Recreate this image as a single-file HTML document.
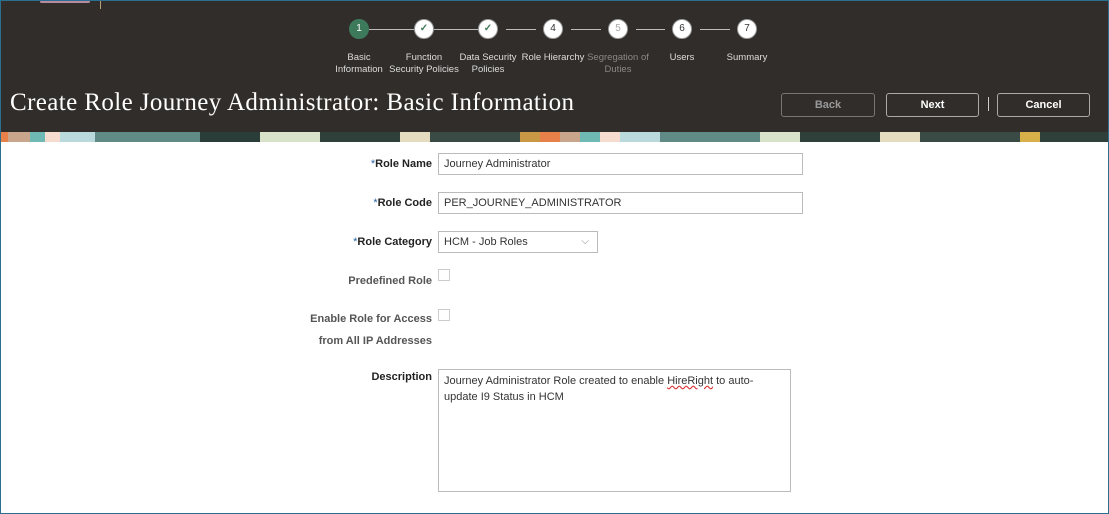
<!DOCTYPE html>
<html><head><style>
body{margin:0;width:1109px;height:514px;overflow:hidden;font-family:"Liberation Sans",sans-serif;background:#fff;position:relative}
.frame{position:absolute;inset:0;border:1px solid #2a6f8f;box-sizing:border-box;pointer-events:none;z-index:5}
.hdr{position:absolute;left:0;top:0;width:1109px;height:132px;background:#312d2a}
.banner{position:absolute;left:0;top:132px;width:1109px;height:10px;background:linear-gradient(90deg,#e8804a 0 8px,#c9a58c 8px 30px,#6fb9b5 30px 45px,#f6dccf 45px 60px,#b9d9dc 60px 95px,#5f8a85 95px 200px,#2b3d38 200px 260px,#d8e2c8 260px 320px,#2f3f3a 320px 400px,#e5dcc0 400px 430px,#3a4a44 430px 520px,#c99844 520px 540px,#e8804a 540px 560px,#c9a58c 560px 580px,#6fb9b5 580px 600px,#f6dccf 600px 620px,#b9d9dc 620px 660px,#5f8a85 660px 760px,#d8e2c8 760px 800px,#2f3f3a 800px 880px,#e5dcc0 880px 920px,#3a4a44 920px 1020px,#d8b04a 1020px 1040px,#2f3f3a 1040px 1109px)}
.st{position:absolute;top:19px;width:20px;height:20px;border-radius:50%;background:#fff;border:1px solid #999;box-sizing:border-box;color:#333;font-size:10px;text-align:center;line-height:18px}
.ln{position:absolute;top:29px;height:1px;background:#bbb}
.lb{position:absolute;top:51px;width:90px;margin-left:-45px;text-align:center;color:#ddd;font-size:9.5px;line-height:12px}
h1{position:absolute;left:10px;top:89px;margin:0;font-family:"Liberation Serif",serif;font-weight:normal;color:#fff;font-size:25px;letter-spacing:0.4px}
.btn{position:absolute;top:93px;height:24px;border:1px solid #aaa;border-radius:3px;box-sizing:border-box;color:#fff;font-weight:bold;font-size:11px;text-align:center;line-height:22px}
.l{position:absolute;right:677px;font-size:11px;color:#555;text-align:right;font-weight:bold}
.l.d{color:#222}
.l b{color:#2863a0;font-weight:normal}
.in{position:absolute;left:438px;height:22px;border:1px solid #bbb;box-sizing:border-box;font-size:11px;color:#333;padding:0 5px;line-height:20px}
.cb{position:absolute;left:438px;width:12px;height:12px;border:1px solid #ccc;box-sizing:border-box}
</style></head><body>
<div class="hdr"></div>
<div style="position:absolute;left:40px;top:0;width:50px;height:3px;background:#b88aa0;border-radius:2px"></div>
<div style="position:absolute;left:100px;top:0;width:1px;height:9px;background:#b9a27a"></div>
<div class="ln" style="left:369px;width:45px"></div>
<div class="ln" style="left:434px;width:44px"></div>
<div class="ln" style="left:506px;width:30px"></div>
<div class="ln" style="left:571px;width:30px"></div>
<div class="ln" style="left:636px;width:29px"></div>
<div class="ln" style="left:700px;width:30px"></div>
<div class="st" style="left:349px;background:#3d7a5b;border-color:#3d7a5b;color:#fff">1</div>
<div class="st" style="left:414px;color:#3d7a5b;font-weight:bold">✓</div>
<div class="st" style="left:478px;color:#3d7a5b;font-weight:bold">✓</div>
<div class="st" style="left:543px">4</div>
<div class="st" style="left:608px;color:#aaa">5</div>
<div class="st" style="left:672px">6</div>
<div class="st" style="left:737px">7</div>
<div class="lb" style="left:359px;top:52px">Basic<br>Information</div>
<div class="lb" style="left:424px;top:52px">Function<br>Security Policies</div>
<div class="lb" style="left:488px;top:52px">Data Security<br>Policies</div>
<div class="lb" style="left:553px;top:52px">Role Hierarchy</div>
<div class="lb" style="left:618px;color:#888;top:52px">Segregation of<br>Duties</div>
<div class="lb" style="left:682px;top:52px">Users</div>
<div class="lb" style="left:747px;top:52px">Summary</div>
<h1>Create Role Journey Administrator: Basic Information</h1>
<div class="btn" style="left:781px;width:94px;color:#999;border-color:#777">Back</div>
<div class="btn" style="left:886px;width:93px">Next</div>
<div style="position:absolute;left:988px;top:97px;width:1px;height:14px;background:#ccc"></div>
<div class="btn" style="left:997px;width:93px">Cancel</div>
<div class="banner"></div>

<div class="l d" style="top:158px"><b>*</b>Role Name</div>
<div class="in" style="top:153px;width:365px">Journey Administrator</div>
<div class="l d" style="top:197px"><b>*</b>Role Code</div>
<div class="in" style="top:192px;width:365px">PER_JOURNEY_ADMINISTRATOR</div>
<div class="l d" style="top:236px"><b>*</b>Role Category</div>
<div class="in" style="top:231px;width:160px">HCM - Job Roles<span style="position:absolute;right:8px;color:#888;font-size:10px">⌵</span></div>
<div class="l" style="top:275px">Predefined Role</div>
<div class="cb" style="top:269px"></div>
<div class="l" style="top:308px;line-height:22px">Enable Role for Access<br>from All IP Addresses</div>
<div class="cb" style="top:309px"></div>
<div class="l d" style="top:371px">Description</div>
<div class="in" style="top:369px;width:353px;height:123px;line-height:16px;padding-top:3px">Journey Administrator Role created to enable <u style="text-decoration-color:#d33;text-decoration-style:wavy">HireRight</u> to auto-update I9 Status in HCM</div>
<div class="frame"></div>
</body></html>
